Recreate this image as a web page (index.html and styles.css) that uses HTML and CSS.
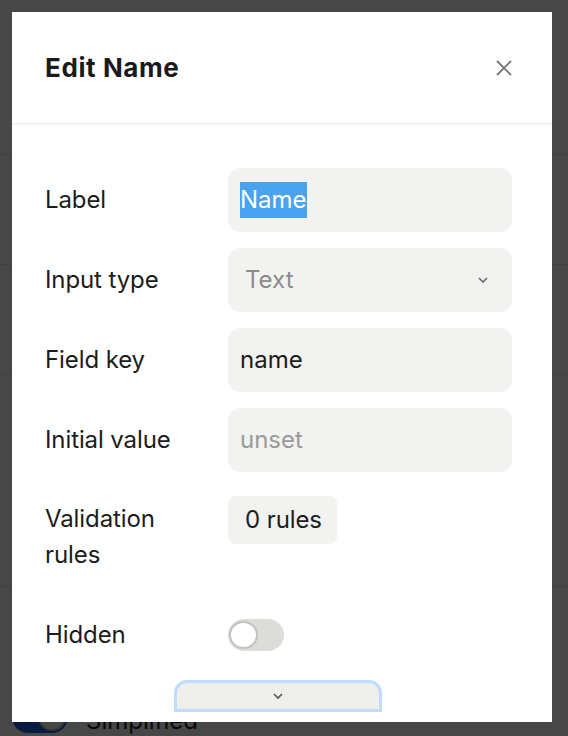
FILE: index.html
```html
<!DOCTYPE html>
<html lang="en">
<head>
<meta charset="utf-8">
<title>Edit Name</title>
<link rel="stylesheet" href="styles.css">
</head>
<body>
<div class="page">
  <div class="prow prow-1">
    <span class="ptext">Field type group</span>
    <span class="ptext">apply</span>
  </div>
  <div class="prow prow-2"></div>
  <div class="prow prow-3"></div>
  <div class="prow prow-4"></div>
  <div class="prow prow-5">
    <span class="ptoggle"><span class="pknob"></span></span>
    <span class="ptext">Simplified</span>
  </div>
</div>
<div class="scrim"></div>
<div class="modal">
  <div class="modal-header">
    <h2 class="modal-title">Edit Name</h2>
    <svg class="close" width="18" height="18" viewBox="0 0 18 18"><path d="M2 2 L16 16 M16 2 L2 16" stroke="#777" stroke-width="1.8" fill="none"/></svg>
  </div>
  <div class="modal-body">
    <div class="row">
      <div class="label">Label</div>
      <div class="field"><span class="sel">Name</span></div>
    </div>
    <div class="row">
      <div class="label">Input type</div>
      <div class="field select"><span class="muted">Text</span>
        <svg class="chev" width="10" height="6" viewBox="0 0 10 6"><path d="M1 1 L5 5 L9 1" stroke="#666" stroke-width="1.6" fill="none"/></svg>
      </div>
    </div>
    <div class="row">
      <div class="label">Field key</div>
      <div class="field">name</div>
    </div>
    <div class="row">
      <div class="label">Initial value</div>
      <div class="field"><span class="placeholder">unset</span></div>
    </div>
    <div class="row row-rules">
      <div class="label">Validation rules</div>
      <div class="ctrl"><span class="btn">0 rules</span></div>
    </div>
    <div class="row row-toggle">
      <div class="label">Hidden</div>
      <div class="ctrl"><span class="toggle"><span class="knob"></span></span></div>
    </div>
    <div class="more">
      <svg width="12" height="8" viewBox="0 0 12 8"><path d="M2 2 L6 6 L10 2" stroke="#555" stroke-width="1.7" fill="none"/></svg>
    </div>
  </div>
</div>
</body>
</html>
```

FILE: styles.css
```css
* { box-sizing: border-box; }
html, body { margin: 0; padding: 0; }
body {
  width: 568px;
  height: 736px;
  overflow: hidden;
  background: #ffffff;
  font-family: Inter, "Noto Sans", "Liberation Sans", sans-serif;
  color: #1b1b1b;
}

/* underlying page */
.page { margin-top: -31px; }
.prow {
  border-bottom: 1px solid #e4e4e4;
  display: flex;
  align-items: flex-start;
  font-size: 24px;
  line-height: 36px;
}
.prow-1 { height: 186px; justify-content: space-between; padding: 0 113px 0 48px; color: #6a6a6a; }
.prow-2 { height: 110px; }
.prow-3 { height: 110px; }
.prow-4 { height: 212px; }
.prow-5 { height: 160px; border-bottom: none; padding: 114px 0 0 12px; gap: 18px; color: #1e1e1e; }
.prow-5 .ptext { margin-top: 2px; }
.ptoggle {
  width: 56px; height: 32px; border-radius: 16px;
  background: #2563eb; position: relative; flex: none;
}
.pknob {
  position: absolute; right: 2px; top: 2px;
  width: 28px; height: 28px; border-radius: 50%;
  background: #ffffff; border: 2px solid #c8c8c8;
}
.scrim { position: fixed; inset: 0; background: rgba(0, 0, 0, 0.72); }

/* modal */
.modal {
  position: fixed;
  left: 12px; top: 12px;
  width: 540px; height: 710px;
  background: #ffffff;
  display: flex;
  flex-direction: column;
  overflow: hidden;
}
.modal-header {
  height: 112px;
  flex: none;
  display: flex;
  align-items: center;
  justify-content: space-between;
  padding: 0 39px 0 33px;
  border-bottom: 1px solid #ececec;
  box-shadow: 0 1px 3px rgba(0, 0, 0, 0.05);
  position: relative;
  z-index: 1;
}
.modal-title {
  margin: 0;
  font-size: 26px;
  font-weight: 700;
  line-height: 32px;
  color: #1a1a1a;
  letter-spacing: 0.6px;
}
.close { display: block; }
.modal-body {
  flex: 1;
  position: relative;
  padding: 44px 40px 0 33px;
}
.row {
  display: grid;
  grid-template-columns: 160px 284px;
  column-gap: 23px;
  align-items: start;
  margin-bottom: 16px;
}
.label {
  font-size: 24px;
  line-height: 36px;
  padding-top: 14px;
  color: #1c1c1c;
  letter-spacing: -0.1px;
}
.field {
  height: 64px;
  border-radius: 13px;
  background: #f2f2f1;
  padding: 0 12px;
  display: flex;
  align-items: center;
  font-size: 24px;
  line-height: 36px;
  color: #1c1c1c;
}
.sel { background: #4aa3ef; color: #ffffff; display: inline-block; line-height: 36px; }
.select { padding-left: 17px; justify-content: space-between; padding-right: 24px; }
.muted { color: #8c8c8c; }
.placeholder { color: #9a9a9a; }
.chev { display: block; }
.ctrl { display: flex; }
.row-rules { margin-bottom: 0; }
.row-rules .label { padding-top: 13px; width: 150px; }
.row-rules .ctrl { padding-top: 8px; }
.btn {
  height: 48px;
  padding: 0 15px 0 17px;
  border-radius: 8px;
  background: #f2f2f1;
  font-size: 24px;
  line-height: 48px;
  color: #1c1c1c;
  letter-spacing: -0.1px;
}
.row-toggle { align-items: center; margin-top: 44px; }
.row-toggle .label { padding-top: 0; }
.toggle {
  width: 56px; height: 32px; border-radius: 16px;
  background: #dcdcd8; position: relative;
}
.knob {
  position: absolute; left: 1px; top: 2px;
  width: 29px; height: 28px; border-radius: 50%;
  background: #ffffff; border: 2px solid #c3c3bf;
}
.more {
  position: absolute;
  left: 162px;
  bottom: 10px;
  width: 208px;
  height: 32px;
  border: 3px solid #bfdcfc;
  border-radius: 13px 13px 0 0;
  background: #efefeb;
  display: flex;
  align-items: center;
  justify-content: center;
}
.more svg { display: block; }
```
